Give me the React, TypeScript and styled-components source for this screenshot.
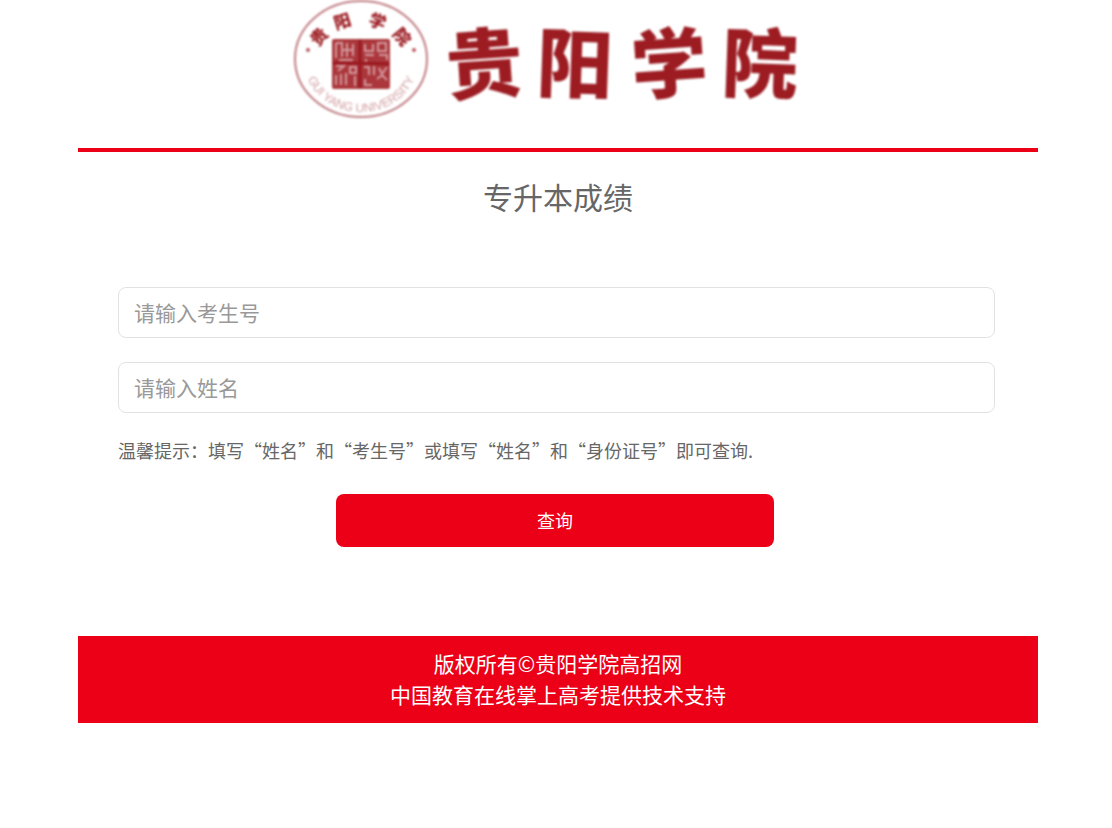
import React from "react";
import styled, { createGlobalStyle } from "styled-components";

const RED = "#eb0017";
const INK = "#9c1c22";
const FONT = '"Noto Sans CJK SC", "Noto Sans", sans-serif';

const GlobalStyle = createGlobalStyle`
  *, *::before, *::after { box-sizing: border-box; }
  body {
    margin: 0;
    background: #fff;
    color: #666;
    font-family: ${FONT};
  }
`;

const Page = styled.div`
  padding: 0 74px 0 78px;
`;

const Header = styled.header`
  display: flex;
  justify-content: center;
  padding-right: 26px;
  height: 152px;
  border-bottom: 4px solid ${RED};
`;

const Logo = styled.svg`
  display: block;
  width: 520px;
  height: 124px;
  overflow: visible;
  filter: blur(0.8px);
`;

const Title = styled.h1`
  margin: 22px 0 0;
  font-size: 30px;
  line-height: 45px;
  font-weight: 400;
  text-align: center;
`;

const Form = styled.form`
  display: flex;
  flex-direction: column;
  gap: 24px;
  padding: 68px 43px 0 40px;
`;

const Field = styled.input`
  width: 100%;
  height: 51px;
  padding: 0 15px 2px;
  border: 1px solid #e2e2e2;
  border-radius: 8px;
  background: #fff;
  color: #666;
  font-family: inherit;
  font-size: 21px;
  outline: none;

  &::placeholder {
    color: #999;
    opacity: 1;
  }
`;

const Tip = styled.p`
  margin: 0;
  font-size: 18px;
  line-height: 27px;
`;

const Actions = styled.div`
  display: flex;
  justify-content: center;
  padding: 6px 3px 0 0;
`;

const SubmitButton = styled.button`
  width: 438px;
  max-width: 100%;
  height: 53px;
  padding: 0 0 2px;
  border: 0;
  border-radius: 8px;
  background: ${RED};
  color: #fff;
  font-family: inherit;
  font-size: 18px;
  cursor: pointer;
`;

const Footer = styled.footer`
  margin-top: 89px;
  padding: 12px 0 13px;
  background: ${RED};
  color: #fff;
  font-size: 21px;
  line-height: 31px;
  text-align: center;
`;

const FooterLine = styled.p`
  margin: 0;
`;

const sealChars = [
  { char: "贵", x: 33, y: 36, turn: -48 },
  { char: "阳", x: 57, y: 20, turn: -17 },
  { char: "学", x: 93, y: 20, turn: 20 },
  { char: "院", x: 118, y: 36, turn: 50 },
];

const brushChars = [
  { char: "贵", x: 199, turn: -4 },
  { char: "阳", x: 290, turn: 2 },
  { char: "学", x: 384, turn: -4 },
  { char: "院", x: 475, turn: 2 },
];

function SchoolLogo() {
  return (
    <Logo viewBox="0 0 520 124" role="img" aria-label="贵阳学院">
      <defs>
        <path id="ring" d="M18 61 C21 92 46 112 76 112 C106 112 131 92 134 61" />
      </defs>
      <ellipse cx="76" cy="59" rx="66" ry="58" fill="none" stroke="#c07c82" strokeWidth="2" />
      <circle cx="23" cy="50" r="2" fill="#b8585f" />
      <circle cx="129" cy="50" r="2" fill="#b8585f" />
      {sealChars.map((c) => (
        <text
          key={c.char}
          x={c.x}
          y={c.y}
          textAnchor="middle"
          dominantBaseline="central"
          transform={`rotate(${c.turn} ${c.x} ${c.y})`}
          fontFamily={FONT}
          fontWeight="900"
          fontSize="17"
          fill={INK}
        >
          {c.char}
        </text>
      ))}
      <text fontFamily="Liberation Sans, sans-serif" fontSize="12" fill="#d3a0a4">
        <textPath href="#ring" startOffset="50%" textAnchor="middle">
          GUI YANG UNIVERSITY
        </textPath>
      </text>

      <rect x="47" y="39" width="58" height="50" rx="2" fill="#ab373c" />
      <g fill="none" stroke="#d39a9e" strokeWidth="2">
        <path d="M51 43v15M51 43h6v14M62 43v14M57 50h12M68 44v12M54 60h14" />
        <path d="M80 44v7h8v-7M80 55h9M81 59v3M93 43h8v8h-8zM94 55h8v5" />
        <path d="M51 66h8l-6 5M51 75v10M56 74v11M61 73v12M65 67h6v6h-6zM70 76v10" />
        <path d="M79 67h5v8M80 79v6h7M89 66v9M94 68l3 6 5-7M92 79l5-4 5 5" />
      </g>
      <path d="M75 40v48M48 63h27l29 1" stroke="#99191f" strokeWidth="3" fill="none" />

      {brushChars.map((c) => (
        <text
          key={c.char}
          x={c.x}
          y="92"
          textAnchor="middle"
          transform={`rotate(${c.turn} ${c.x} 60)`}
          fontFamily={FONT}
          fontWeight="900"
          fontSize="76"
          fill={INK}
        >
          {c.char}
        </text>
      ))}
    </Logo>
  );
}

export default function App() {
  return (
    <>
      <GlobalStyle />
      <Page>
        <Header>
          <SchoolLogo />
        </Header>
        <main>
          <Title>专升本成绩</Title>
          <Form onSubmit={(e: React.FormEvent) => e.preventDefault()}>
            <Field type="text" name="examNo" aria-label="考生号" placeholder="请输入考生号" />
            <Field type="text" name="name" aria-label="姓名" placeholder="请输入姓名" />
            <Tip>温馨提示：填写“姓名”和“考生号”或填写“姓名”和“身份证号”即可查询.</Tip>
            <Actions>
              <SubmitButton type="submit">查询</SubmitButton>
            </Actions>
          </Form>
        </main>
        <Footer>
          <FooterLine>版权所有©贵阳学院高招网</FooterLine>
          <FooterLine>中国教育在线掌上高考提供技术支持</FooterLine>
        </Footer>
      </Page>
    </>
  );
}
